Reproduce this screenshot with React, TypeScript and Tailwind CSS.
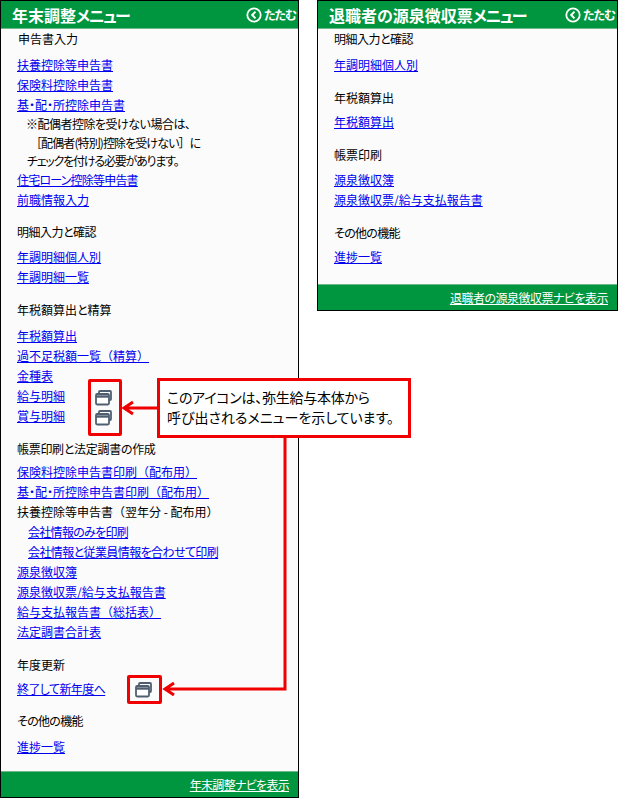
const font = { fontFamily: '"Noto Sans CJK JP", "Liberation Sans", sans-serif' };

// kana sit tight in the reference, brackets keep their full width
function Txt({ text }: { text: string }) {
  return (
    <>
      {text.split(/([（）［］])/).map((part, i) =>
        /^[（）［］]$/.test(part) ? (
          <span key={i} className="[font-feature-settings:normal]">
            {part}
          </span>
        ) : (
          part
        )
      )}
    </>
  );
}

function Heading({ text, className = "" }: { text: string; className?: string }) {
  return <div className={`h-5 leading-5 text-black ${className}`}>{text}</div>;
}

function MenuLink({ text, className = "" }: { text: string; className?: string }) {
  return (
    <div className={`h-5 leading-5 ${className}`}>
      <a href="#" className="text-[#0000ee] underline">
        <Txt text={text} />
      </a>
    </div>
  );
}

function WindowsIcon() {
  return (
    <svg width="17" height="16" viewBox="0 0 17 16" fill="none">
      <path d="M4 3.5V2a1 1 0 0 1 1-1h10a1 1 0 0 1 1 1v7a1 1 0 0 1-1 1h-1" stroke="#4f5f70" strokeWidth="1.8" />
      <rect x="1" y="4" width="13" height="10.5" rx="1.2" fill="#fff" stroke="#4f5f70" strokeWidth="1.8" />
      <path d="M1 6.5h13" stroke="#4f5f70" strokeWidth="2.4" />
    </svg>
  );
}

function CollapseButton() {
  return (
    <div className="flex items-center gap-[2px] text-[12px] font-bold tracking-[-1px] text-white">
      <svg width="16" height="16" viewBox="0 0 16 16" fill="none">
        <circle cx="8" cy="8" r="6.7" stroke="#fff" strokeWidth="1.8" />
        <path d="M9.5 4.6 6.2 8l3.3 3.4" stroke="#fff" strokeWidth="2" />
      </svg>
      たたむ
    </div>
  );
}

function Panel({
  title,
  footer,
  footerClass,
  className,
  children,
}: {
  title: string;
  footer: string;
  footerClass: string;
  className: string;
  children: React.ReactNode;
}) {
  return (
    <div className={`flex shrink-0 flex-col border border-black bg-[#fbfbfb] ${className}`}>
      <div className="flex h-[28px] shrink-0 items-center justify-between border-b border-[#6fb88a] bg-[#00963f] pr-[2px] pl-[11px]">
        <span className="text-[16px] font-bold text-white">
          {title}
          <span className="tracking-[-1.5px]">メニュー</span>
        </span>
        <CollapseButton />
      </div>
      <div className="flex-1 pl-[16px] text-[12px]">{children}</div>
      <div className="flex h-[26px] shrink-0 items-center justify-end border-t border-[#6fb88a] bg-[#00963f] pr-[9px] text-[12px] text-white">
        <a href="#" className={`underline ${footerClass}`}>
          {footer}
        </a>
      </div>
    </div>
  );
}

export default function App() {
  return (
    <div className="relative h-[798px] w-[618px] overflow-hidden bg-white [font-feature-settings:'palt']" style={font}>
      <div className="flex items-start gap-[18px]">
        <Panel title="年末調整" footer="年末調整ナビを表示" footerClass="tracking-[-0.7px]" className="h-[798px] w-[299px]">
          <Heading text="申告書入力" className="pl-[1px]" />
          <MenuLink text="扶養控除等申告書" className="mt-[6px]" />
          <MenuLink text="保険料控除申告書" />
          <MenuLink text="基・配・所控除申告書" />
          <div className="pl-[10px] leading-[18.5px] text-black">
            <div className="-ml-[1px] tracking-[-0.5px]">※配偶者控除を受けない場合は、</div>
            <div className="pl-[3px] tracking-[-0.9px]">
              <Txt text="［配偶者(特別)控除を受けない］に" />
            </div>
            <div className="tracking-[-1.2px]">チェックを付ける必要があります。</div>
          </div>
          <MenuLink text="住宅ローン控除等申告書" className="-mt-[1px] tracking-[-0.8px]" />
          <MenuLink text="前職情報入力" />

          <Heading text="明細入力と確認" className="mt-[12px] tracking-[-0.5px]" />
          <MenuLink text="年調明細個人別" className="mt-[5px]" />
          <MenuLink text="年調明細一覧" />

          <Heading text="年税額算出と精算" className="mt-[13px]" />
          <MenuLink text="年税額算出" className="mt-[6px]" />
          <MenuLink text="過不足税額一覧（精算）" />
          <MenuLink text="金種表" />
          <MenuLink text="給与明細" />
          <MenuLink text="賞与明細" />

          <Heading text="帳票印刷と法定調書の作成" className="mt-[13px] tracking-[-0.3px]" />
          <MenuLink text="保険料控除申告書印刷（配布用）" className="mt-[3px]" />
          <MenuLink text="基・配・所控除申告書印刷（配布用）" />
          <div className="h-5 leading-5 text-black">
            <Txt text="扶養控除等申告書（翌年分 - 配布用）" />
          </div>
          <MenuLink text="会社情報のみを印刷" className="pl-[11px] tracking-[-0.7px]" />
          <MenuLink text="会社情報と従業員情報を合わせて印刷" className="pl-[11px] tracking-[-0.6px]" />
          <MenuLink text="源泉徴収簿" />
          <MenuLink text="源泉徴収票/給与支払報告書" />
          <MenuLink text="給与支払報告書（総括表）" />
          <MenuLink text="法定調書合計表" />

          <Heading text="年度更新" className="mt-[13px]" />
          <MenuLink text="終了して新年度へ" className="mt-[4px] tracking-[-0.6px]" />

          <Heading text="その他の機能" className="mt-[12px] tracking-[-0.7px]" />
          <MenuLink text="進捗一覧" className="mt-[6px]" />
        </Panel>

        <Panel title="退職者の源泉徴収票" footer="退職者の源泉徴収票ナビを表示" footerClass="tracking-[-0.5px]" className="h-[311px] w-[301px]">
          <Heading text="明細入力と確認" className="tracking-[-0.5px]" />
          <MenuLink text="年調明細個人別" className="mt-[6px]" />

          <Heading text="年税額算出" className="mt-[13px]" />
          <MenuLink text="年税額算出" className="mt-[4px]" />

          <Heading text="帳票印刷" className="mt-[13px]" />
          <MenuLink text="源泉徴収簿" className="mt-[5px]" />
          <MenuLink text="源泉徴収票/給与支払報告書" />

          <Heading text="その他の機能" className="mt-[13px] tracking-[-0.7px]" />
          <MenuLink text="進捗一覧" className="mt-[4px]" />
        </Panel>
      </div>

      {/* annotation */}
      <div className="absolute top-[379px] left-[88px] flex h-[57px] w-[34px] flex-col items-center justify-center gap-[4px] rounded-[2px] border-[3px] border-[#f00000] pr-[3px]">
        <WindowsIcon />
        <WindowsIcon />
      </div>
      <div className="absolute top-[675px] left-[127px] flex h-[29px] w-[35px] items-center justify-center rounded-[2px] border-[3px] border-[#f00000] pr-[3px]">
        <WindowsIcon />
      </div>
      <div className="absolute top-[378px] left-[157px] h-[60px] w-[254px] border-[3px] border-[#f00000] bg-white pt-[6px] pl-[7px] text-[14px] leading-[20px] whitespace-nowrap text-black">
        <div className="tracking-[-0.25px]">このアイコンは、弥生給与本体から</div>
        <div>呼び出されるメニューを示しています。</div>
      </div>
      <svg className="absolute top-0 left-0" width="618" height="798" fill="none">
        <path d="M157 408H124M133 402l-9 6 9 6" stroke="#f00000" strokeWidth="3" />
        <path d="M285 438V689H165M174 683l-9 6 9 6" stroke="#f00000" strokeWidth="3" />
      </svg>
    </div>
  );
}
